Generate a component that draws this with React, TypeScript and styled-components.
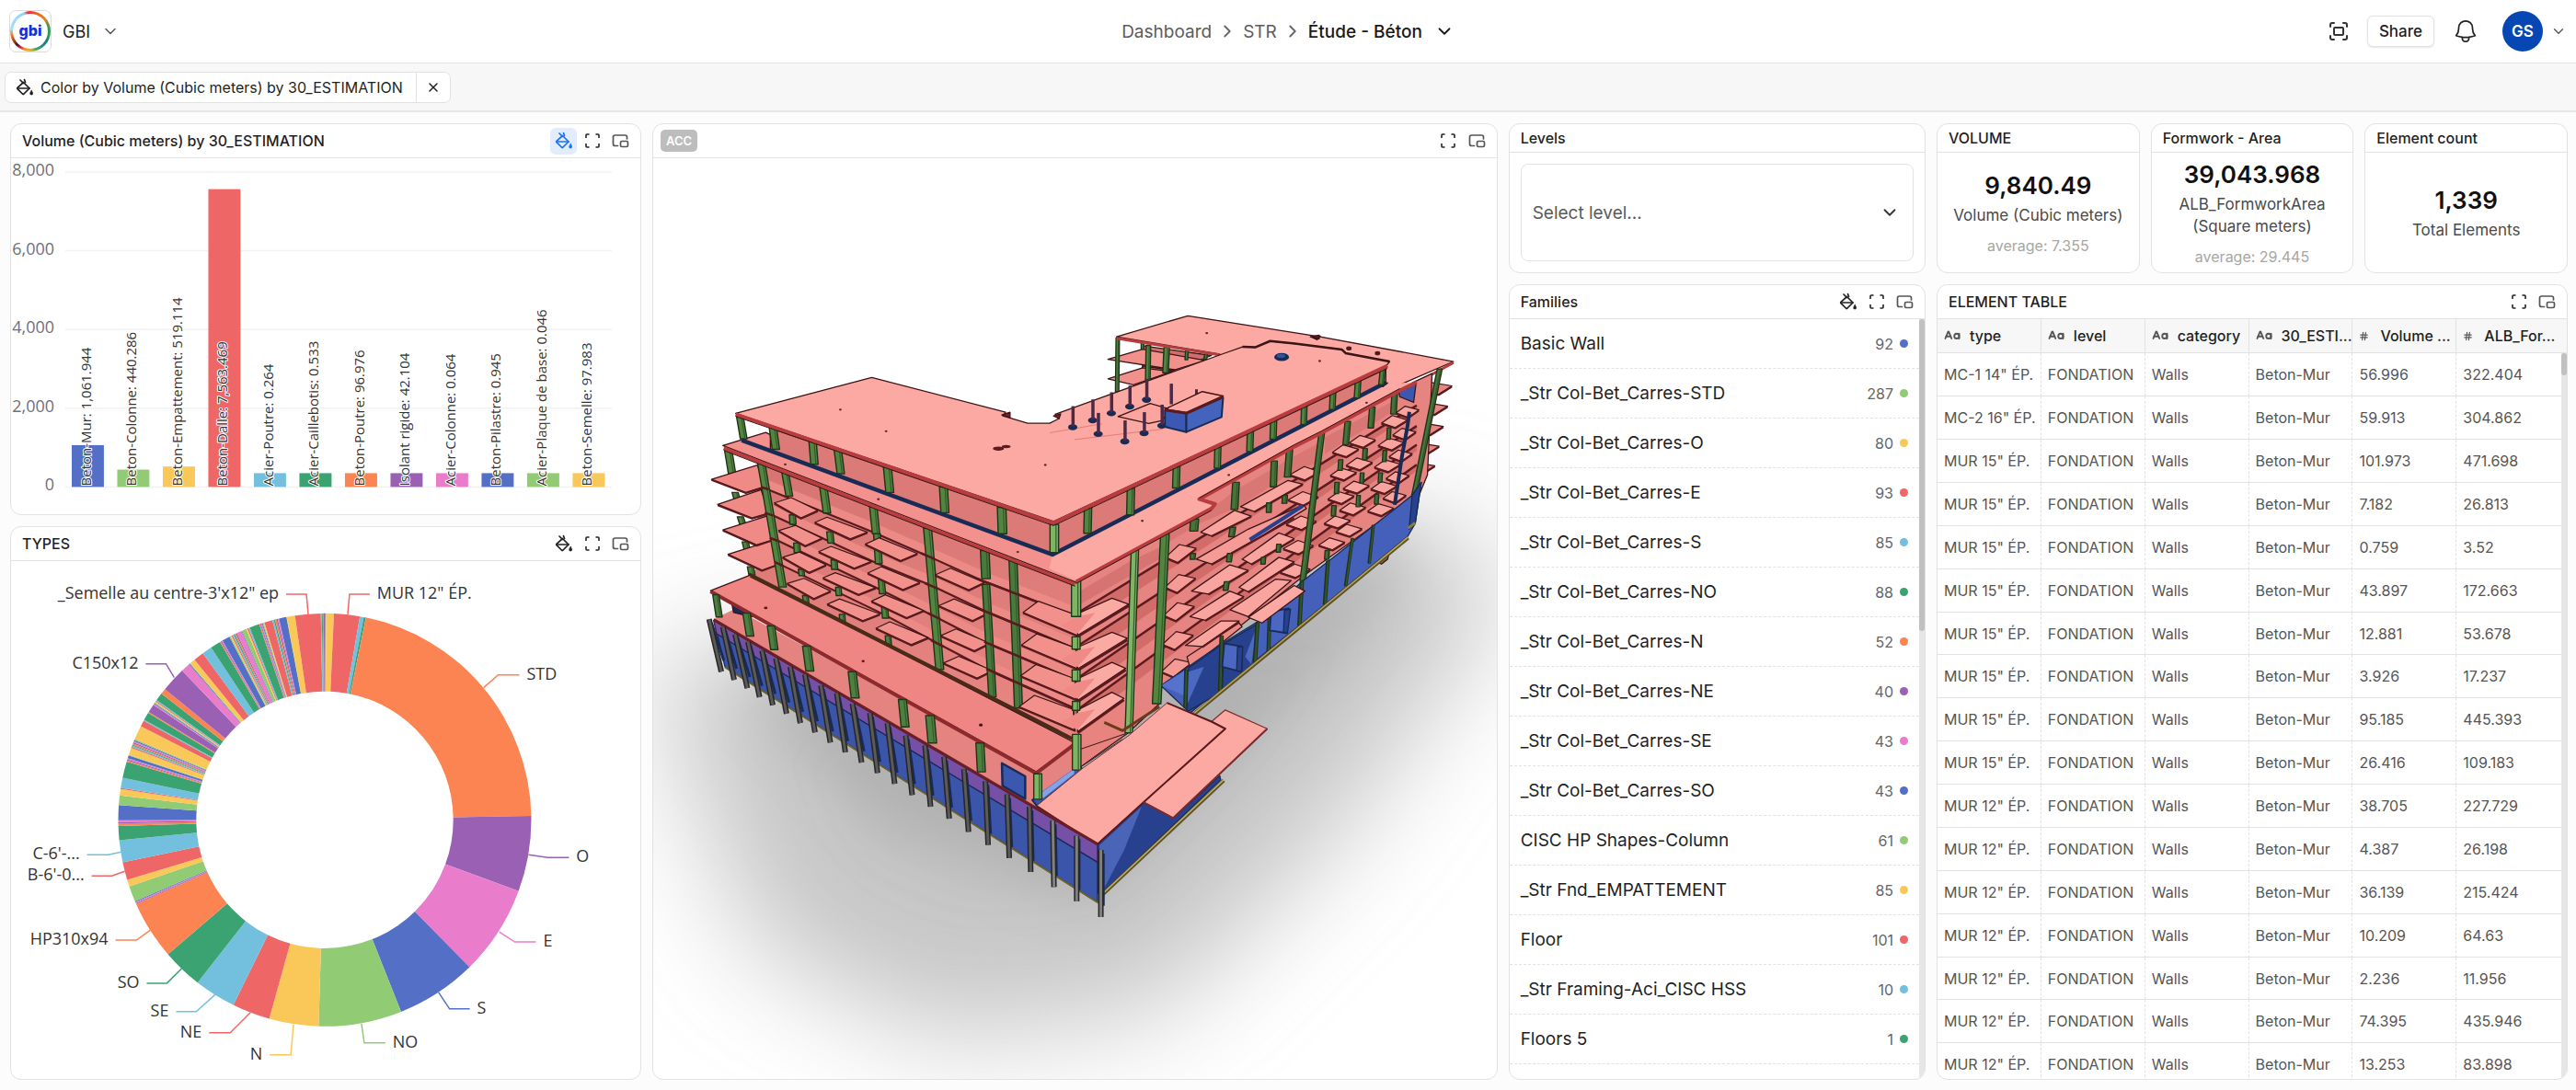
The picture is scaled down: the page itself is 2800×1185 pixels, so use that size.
import React from "react";
import styled, { createGlobalStyle, css } from "styled-components";
import { CaseSensitive, ChevronDown, ChevronRight, Fullscreen, Hash, X } from "lucide-react";

/* ---------- theme ---------- */

const line = "#e2e2e2";
const sans = `Inter, "Liberation Sans", sans-serif`;
const chartFont = `"Open Sans", "Noto Sans", sans-serif`;
const palette = ["#5470c6", "#91cc75", "#fac858", "#ee6666", "#73c0de", "#3ba272", "#fc8452", "#9a60b4", "#ea7ccc"];

const GlobalStyle = createGlobalStyle`
  *, *::before, *::after { box-sizing: border-box; }
  body { margin: 0; background: #fcfcfc; color: #1f1f1f; font-family: ${sans}; }
  button, select { font: inherit; color: inherit; }
`;

/* ---------- shell ---------- */

const Page = styled.div`
  display: flex;
  flex-direction: column;
  height: 100vh;
  min-height: 900px;
`;

const TopBar = styled.header`
  display: grid;
  grid-template-columns: 1fr auto 1fr;
  align-items: center;
  height: 69px;
  padding: 0 10px;
  background: #fff;
  border-bottom: 1px solid ${line};
`;

const PlainButton = styled.button`
  display: inline-flex;
  align-items: center;
  padding: 0;
  border: 0;
  background: none;
  cursor: pointer;
`;

const Workspace = styled(PlainButton)`
  justify-self: start;
  gap: 12px;
  font-size: 18px;
`;

const LogoTile = styled.span`
  display: grid;
  place-items: center;
  width: 46px;
  height: 46px;
  border: 1px solid #dcdcdc;
  border-radius: 7px;
  background: #fff;
`;

const LogoRing = styled.span`
  display: grid;
  width: 44px;
  height: 44px;
  padding: 3px;
  border-radius: 50%;
  background: conic-gradient(#e8343c 0deg, #f0641e 20deg, #ee7d1c 50deg, #3c9a52 75deg, #2f9a5a 105deg, #127c8a 125deg, #2b8f86 145deg, #5aa83c 165deg, #f2b01e 180deg, #f08c1c 200deg, #d81e5a 212deg, #3a1a1a 225deg, #b3441c 240deg, #f08a3c 262deg, #a8dcf8 275deg, #8fd4f8 340deg, #e8343c 352deg);
`;

const LogoText = styled.span`
  display: grid;
  place-items: center;
  border-radius: 50%;
  background: #fff;
  color: #1c2be6;
  font-size: 16px;
  font-weight: 800;
  line-height: 16px;
  padding-bottom: 3px;
`;

const Crumbs = styled.nav`
  display: flex;
  align-items: center;
  gap: 6px;
  font-size: 19px;
  color: #666;
`;

const Crumb = styled.a`
  color: #5c5c5c;
  text-decoration: none;
`;

const CurrentCrumb = styled(PlainButton)`
  gap: 13px;
  font-size: 19px;
  font-weight: 500;
  color: #1a1a1a;
`;

const Tools = styled.div`
  display: flex;
  align-items: center;
  justify-self: end;
  gap: 19px;
`;

const ShareButton = styled.button`
  height: 34px;
  padding: 0 12px;
  border: 1px solid ${line};
  border-radius: 6px;
  background: #fff;
  box-shadow: 0 1px 2px rgba(0, 0, 0, 0.1);
  font-size: 17px;
  font-weight: 500;
  cursor: pointer;
`;

const Account = styled(PlainButton)`
  gap: 8px;
  margin-left: 6px;
`;

const Avatar = styled.span`
  display: grid;
  place-items: center;
  width: 44px;
  height: 44px;
  border-radius: 50%;
  background: #0747b4;
  color: #fff;
  font-size: 17px;
  font-weight: 600;
`;

const FilterBar = styled.div`
  display: flex;
  align-items: center;
  height: 53px;
  padding: 0 5px;
  background: #f7f7f7;
  border-bottom: 2px solid #e6e6e6;
`;

const Chip = styled.div`
  display: flex;
  height: 34px;
  overflow: hidden;
  border: 1px solid ${line};
  border-radius: 7px;
  background: #fff;
  font-size: 16px;
`;

const ChipLabel = styled.span`
  display: flex;
  align-items: center;
  gap: 7px;
  padding: 0 14px 0 11px;
`;

const ChipClose = styled(PlainButton)`
  justify-content: center;
  width: 37px;
  border-left: 1px solid ${line};
`;

/* ---------- dashboard cards ---------- */

const Board = styled.main`
  flex: 1;
  min-height: 0;
  display: grid;
  grid-template-columns: repeat(12, minmax(0, 1fr));
  grid-template-rows: repeat(12, minmax(0, 1fr));
  gap: 12px;
  padding: 12px 9px 11px 11px;
`;

const Card = styled.section<{ $cols: string; $rows: string }>`
  position: relative;
  grid-column: ${(p) => p.$cols};
  grid-row: ${(p) => p.$rows};
  display: flex;
  flex-direction: column;
  min-width: 0;
  min-height: 0;
  overflow: hidden;
  border: 1px solid ${line};
  border-radius: 12px;
  background: #fff;
`;

const KpiRow = styled.div`
  grid-column: span 3;
  grid-row: span 2;
  display: grid;
  grid-template-columns: repeat(3, minmax(0, 1fr));
  gap: 12px;
`;

const CardHeader = styled.div<{ $compact?: boolean }>`
  flex: none;
  display: flex;
  align-items: center;
  justify-content: space-between;
  height: ${(p) => (p.$compact ? 31 : 37)}px;
  padding: 0 7px 0 12px;
  border-bottom: 1px solid ${line};
`;

const CardTitle = styled.h2`
  margin: 0;
  font-size: 16px;
  font-weight: 500;
  line-height: 20px;
`;

const Actions = styled.div`
  display: flex;
  gap: 2px;
`;

const IconButton = styled.button<{ $active?: boolean }>`
  display: grid;
  place-items: center;
  width: 29px;
  height: 29px;
  padding: 0;
  border: 0;
  border-radius: 6px;
  background: ${(p) => (p.$active ? "#e3ecfc" : "transparent")};
  color: ${(p) => (p.$active ? "#1a73f0" : "#222")};
  cursor: pointer;
`;

const CardBody = styled.div`
  flex: 1;
  display: flex;
  min-height: 0;
`;

const Drawing = styled.svg`
  display: block;
  width: 100%;
  height: 100%;
`;

const SourceBadge = styled.span`
  margin-left: -4px;
  padding: 0 6px;
  border-radius: 5px;
  background: #bdbdbd;
  color: #fff;
  font-size: 13px;
  font-weight: 600;
  line-height: 24px;
`;

/* ---------- level select ---------- */

const SelectWrap = styled.label`
  flex: 1;
  display: grid;
  align-items: center;
  margin: 12px;
  border: 1px solid ${line};
  border-radius: 8px;
  > * { grid-area: 1 / 1; }
  > svg { justify-self: end; margin-right: 14px; pointer-events: none; }
`;

const LevelSelect = styled.select`
  appearance: none;
  width: 100%;
  height: 100%;
  padding: 0 12px;
  border: 0;
  border-radius: 8px;
  background: none;
  color: #5a5a5a;
  font-size: 19px;
`;

/* ---------- kpi ---------- */

const KpiBody = styled.div`
  flex: 1;
  display: flex;
  flex-direction: column;
  align-items: center;
  justify-content: center;
  padding: 2px 12px 0;
  text-align: center;
`;

const KpiValue = styled.strong`
  font-size: 26px;
  font-weight: 600;
  line-height: 32px;
  color: #111;
`;

const KpiLabel = styled.span`
  margin-top: 4px;
  font-size: 17px;
  line-height: 24px;
  color: #4a4a4a;
`;

const KpiNote = styled.span`
  margin-top: 10px;
  font-size: 16px;
  line-height: 22px;
  color: #a6a6a6;
`;

/* ---------- families ---------- */

const FamilyList = styled.ul`
  flex: 1;
  margin: 0;
  padding: 0;
  overflow: hidden;
  list-style: none;
`;

const FamilyRow = styled.li`
  display: flex;
  align-items: center;
  gap: 7px;
  height: 54px;
  padding: 0 12px;
  border-bottom: 1px dashed ${line};
`;

const FamilyName = styled.span`
  flex: 1;
  font-size: 19px;
`;

const FamilyCount = styled.span`
  font-size: 16px;
  color: #666;
`;

const Dot = styled.span<{ $color: string }>`
  width: 9px;
  height: 9px;
  border-radius: 50%;
  background: ${(p) => p.$color};
`;

const Track = styled.div`
  flex: none;
  width: 6px;
  background: #e6e6e6;
`;

const Thumb = styled.div<{ $size: string }>`
  height: ${(p) => p.$size};
  border-radius: 3px;
  background: #c0c0c0;
`;

/* ---------- element table ---------- */

const TableArea = styled(CardBody)`
  position: relative;
  overflow: hidden;
`;

const Table = styled.table`
  align-self: flex-start;
  width: 100%;
  table-layout: fixed;
  border-collapse: separate;
  border-spacing: 0;
  font-size: 16px;
`;

const TableTrack = styled(Track)`
  position: absolute;
  top: 37px;
  right: 0;
  bottom: 0;
`;

const cell = css`
  padding: 0 0 0 7px;
  border-bottom: 1px solid ${line};
  text-align: left;
  white-space: nowrap;
`;

const Th = styled.th`
  ${cell}
  width: 16.5%;
  height: 37px;
  background: #f7f7f7;
  border-right: 1px solid ${line};
  font-weight: 500;
  &:last-child { width: auto; border-right: 0; }
`;

const ThInner = styled.span<{ $wide?: boolean }>`
  display: flex;
  align-items: center;
  gap: ${(p) => (p.$wide ? 12 : 10)}px;
  > svg { flex: none; color: #555; }
`;

/* rows share the window so that seventeen of them are always in view */
const Td = styled.td`
  ${cell}
  height: calc((100vh - 388px) / 17);
  border-right: 1px dashed ${line};
  color: #555;
  &:last-child { border-right: 0; }
`;

/* ---------- icons ---------- */

const BucketIcon = () => (
  <svg width="20" height="20" viewBox="0 0 20 20" fill="none" stroke="currentColor" strokeWidth="1.7" strokeLinecap="round" strokeLinejoin="round" aria-hidden="true">
    <path d="M8.5 4.5 15 11l-6 6q-.8.7-1.6 0L2 11.600q-.6-.7 0-1.300Z" />
    <path d="M2 11h13M5 2l3.500 3.500M9.500 1.500l1 3" />
    <path d="M17.200 13.500q1.800 2.500 1.300 3.700a1.500 1.500 0 0 1-2.700 0q-.4-1.200 1.400-3.700Z" fill="currentColor" strokeWidth=".8" />
  </svg>
);

const ExpandIcon = () => (
  <svg width="16" height="16" viewBox="0 0 16 16" fill="none" stroke="currentColor" strokeWidth="1.6" aria-hidden="true">
    <path d="M1 5V2q0-1 1-1h2.500M11.500 1H14q1 0 1 1v3M15 11v3q0 1-1 1h-2.500M4.500 15H2q-1 0-1-1v-3" />
  </svg>
);

const PipIcon = () => (
  <svg width="19" height="17" viewBox="0 0 19 17" fill="none" stroke="#555" strokeWidth="1.700" strokeLinecap="round" aria-hidden="true">
    <path d="M6.500 13.500H3.500q-2 0-2-2V4q0-2 2-2h11q2 0 2 2v2" />
    <rect x="9.500" y="8.500" width="8" height="6" rx="1.500" />
  </svg>
);

const BellIcon = () => (
  <svg width="30" height="30" viewBox="0 0 24 24" fill="none" stroke="#222" strokeWidth="1.400" strokeLinecap="round" strokeLinejoin="round" aria-hidden="true">
    <path d="M14.857 17.082a23.848 23.848 0 0 0 5.454-1.310A8.967 8.967 0 0 1 18 9.750V9A6 6 0 0 0 6 9v.750a8.967 8.967 0 0 1-2.312 6.022c1.733.640 3.560 1.085 5.455 1.310m5.714 0a24.255 24.255 0 0 1-5.714 0m5.714 0a3 3 0 1 1-5.714 0" />
  </svg>
);

const CardActions = ({ color, active }: { color?: boolean; active?: boolean }) => (
  <Actions>
    {color && <IconButton $active={active} aria-label="Color by"><BucketIcon /></IconButton>}
    <IconButton aria-label="Expand"><ExpandIcon /></IconButton>
    <IconButton aria-label="Pop out"><PipIcon /></IconButton>
  </Actions>
);

/* ---------- bar chart ---------- */

const volumes: [string, number, string][] = [
  ["Beton-Mur", 1061.944, "1,061.944"],
  ["Beton-Colonne", 440.286, "440.286"],
  ["Beton-Empattement", 519.114, "519.114"],
  ["Beton-Dalle", 7563.469, "7,563.469"],
  ["Acier-Poutre", 0.264, "0.264"],
  ["Acier-Caillebotis", 0.533, "0.533"],
  ["Beton-Poutre", 96.976, "96.976"],
  ["Isolant rigide", 42.104, "42.104"],
  ["Acier-Colonne", 0.064, "0.064"],
  ["Beton-Pilastre", 0.945, "0.945"],
  ["Acier-Plaque de base", 0.046, "0.046"],
  ["Beton-Semelle", 97.983, "97.983"],
];

const AxisText = styled.text`
  font: 18px ${chartFont};
  fill: #6e7079;
  text-anchor: end;
`;

const BarText = styled.text`
  font: 15px ${chartFont};
  fill: #333;
  stroke: #fff;
  stroke-width: 2px;
  stroke-linejoin: round;
  paint-order: stroke;
`;

const VolumeChart = () => {
  const left = 58, right = 653, base = 358, height = 343, band = (right - left) / volumes.length;
  return (
    <Drawing viewBox="0 0 683 388" role="img" aria-label="Volume by estimation">
      {[0, 2000, 4000, 6000, 8000].map((v) => {
        const y = base - (v / 8000) * height;
        return (
          <g key={v}>
            <line x1={left} x2={right} y1={y} y2={y} stroke="#f2f2f4" strokeWidth="1.5" />
            <AxisText x={46} y={y + 4}>{v.toLocaleString("en-US")}</AxisText>
          </g>
        );
      })}
      {volumes.map(([name, v], i) => {
        const h = Math.max(15, (v / 8000) * height);
        return <rect key={name} x={left + band * i + 7} y={base - h} width={35} height={h} fill={palette[i % 9]} />;
      })}
      {volumes.map(([name, , label], i) => (
        <BarText key={name} transform={`translate(${left + band * i + 28} ${base - 1}) rotate(-90)`}>{name}: {label}</BarText>
      ))}
    </Drawing>
  );
};

/* ---------- donut ---------- */

/* each entry: end angle in degrees, and how many equal slices run up to it */
const spans: [number, number][] = [
  [0.4, 2], [2.55, 1], [9.8, 1], [10.9, 1], [11.5, 1], [88.9, 1], [110.2, 1], [135.5, 1], [158.3, 1], [181.7, 1],
  [195.6, 1], [206.3, 1], [218, 1], [229.4, 1], [246, 1], [246.8, 3], [251.2, 1], [253.1, 1], [258.1, 1], [264.3, 1],
  [268.3, 1], [269, 1], [269.9, 2], [274.1, 1], [276.8, 1], [278.6, 1], [278.9, 1], [281.8, 1], [286.4, 1], [287.4, 3],
  [288.2, 1], [288.4, 1], [290.4, 1], [293.1, 8], [297, 1], [298.7, 1], [299, 1], [301.2, 1], [301.5, 1], [303.9, 1],
  [305.5, 6], [307.7, 1], [309.3, 1], [316.3, 1], [318.9, 1], [319.4, 2], [320.9, 1], [323.8, 1], [326.6, 1],
  [329.5, 1], [330.3, 3], [332.5, 1], [334.8, 7], [336.2, 1], [336.4, 1], [337.6, 1], [338.7, 3], [341.5, 1],
  [343, 6], [345.3, 1], [347.2, 5], [349.3, 1], [349.4, 1], [351.7, 1], [358.9, 1], [360, 4],
];

const callouts: [string, number, string, boolean][] = [
  [`_Semelle au centre-3'x12" ep`, 3, "323,58 321,36 299,36", true],
  [`MUR 12" ÉP.`, 3, "366,58 368,36 390,36", false],
  ["STD", 6, "514,138 530,124 553,124", false],
  ["O", 7, "563,320 584,323 607,323", false],
  ["E", 8, "531,404 548,415 571,415", false],
  ["S", 0, "465,470 477,488 499,488", false],
  ["NO", 1, "381,504 384,525 407,525", false],
  ["N", 2, "307,505 304,538 281,538", true],
  ["NE", 3, "260,492 238,514 215,514", true],
  ["SE", 4, "222,472 201,491 179,491", true],
  ["SO", 5, "185,444 169,460 147,460", true],
  ["HP310x94", 6, "151,402 136,413 113,413", true],
  ["B-6'-0...", 3, "123,338 109,343 87,343", true],
  ["C-6'-...", 4, "119,317 105,320 82,320", true],
  ["C150x12", 7, "177,127 168,112 146,112", true],
];

const CalloutText = styled.text`
  font: 18px ${chartFont};
  fill: #333;
`;

const ring = (a0: number, a1: number) => {
  const cx = 341, cy = 282, R = 225, r = 140;
  const p = (a: number, q: number) => {
    const t = (a * Math.PI) / 180;
    return `${(cx + q * Math.sin(t)).toFixed(2)} ${(cy - q * Math.cos(t)).toFixed(2)}`;
  };
  return `M${p(a0, R)}A${R} ${R} 0 0 1 ${p(a1, R)}L${p(a1, r)}A${r} ${r} 0 0 0 ${p(a0, r)}Z`;
};

const TypesChart = () => {
  const slices: [number, number][] = [];
  let from = 0;
  spans.forEach(([end, n]) => {
    const step = (end - from) / n;
    for (let i = 0; i < n; i++) slices.push([from + step * i, from + step * (i + 1)]);
    from = end;
  });
  return (
    <Drawing viewBox="0 0 684 564" role="img" aria-label="Types">
      {slices.map(([a, b], i) => <path key={i} d={ring(a, b)} fill={palette[i % 9]} />)}
      {callouts.map(([label, c, points, toLeft]) => {
        const [x, y] = points.split(" ")[2].split(",").map(Number);
        return (
          <g key={label}>
            <polyline points={points} fill="none" stroke={palette[c]} strokeWidth="1.5" />
            <CalloutText x={toLeft ? x - 8 : x + 8} y={y + 5} textAnchor={toLeft ? "end" : "start"}>{label}</CalloutText>
          </g>
        );
      })}
    </Drawing>
  );
};

/* ---------- building model ---------- */

const Facet = styled.g`
  stroke-linejoin: round;
  * { vector-effect: non-scaling-stroke; }
`;

const overall = "translate(700 130) scale(.5995 .574)";
const westView = "translate(760 400) scale(.3333 .4082)";
const eastView = "translate(1160 340) scale(.3333 .4082)";

const tone = { roof: "#fba9a2", west: "#f08c88", slab: "#f2918c", wall: "#dc7a77", edge: "#b93c3e", ink: "#3b1416", green: "#52853f", leaf: "#7db565", pine: "#35592c", blue: "#3c57ae", deep: "#27418f", navy: "#182b56", purple: "#7650a6", pile: "#555" };

type Pt = [number, number];
const Poly = ({ p, f, s = tone.ink, w = 1.3 }: { p: string; f: string; s?: string; w?: number }) => <polygon points={p} fill={f} stroke={s} strokeWidth={w} />;
const Edge = ({ p, s = tone.ink, w = 2 }: { p: string; s?: string; w?: number }) => <polyline points={p} fill="none" stroke={s} strokeWidth={w} />;

/* column: top x, top y, bottom x, bottom y, width */
type Col = [number, number, number, number, number];
const Columns = ({ list, fill = tone.green }: { list: Col[]; fill?: string }) => (
  <>
    {list.map(([x1, y1, x2, y2, w], i) => (
      <g key={i}>
        <Poly p={`${x1 - w / 2},${y1} ${x1 + w / 2},${y1} ${x2 + w / 2},${y2} ${x2 - w / 2},${y2}`} f={fill} s="#1f3319" w={1.4} />
        <Edge p={`${x1 + w / 5},${y1} ${x2 + w / 5},${y2}`} s={tone.pine} w={1.2} />
      </g>
    ))}
  </>
);

/* the same slab outline stamped at several places */
const Slabs = ({ at, shape, fill = tone.slab }: { at: Pt[]; shape: Pt[]; fill?: string }) => (
  <>
    {at.map(([x, y], i) => (
      <g key={i}>
        <Poly p={shape.map(([a, b]) => `${x + a},${y + b}`).join(" ")} f={fill} w={1.2} />
        <Edge p={[shape[0], shape[3], shape[2]].map(([a, b]) => `${x + a},${y + b + 2}`).join(" ")} s="#5c1a1e" w={2} />
      </g>
    ))}
  </>
);

const westFloors = [
  "215,320 565,436 745,500 930,568 1025,597 1228,662",
  "230,388 580,520 755,578 940,650 1030,680 1228,748",
  "245,455 590,590 765,660 940,733 1035,765 1228,832",
  "262,522 600,655 775,732 945,805 1035,838 1228,908",
];

const piles: [number, number, number, number][] = [
  [30, 668, 70, 808], [75, 688, 112, 830], [115, 708, 155, 852], [157, 728, 195, 876], [203, 752, 238, 897],
  [248, 772, 283, 920], [295, 795, 328, 945], [343, 815, 376, 970], [395, 845, 426, 997], [447, 865, 475, 1023],
  [498, 893, 528, 1050], [555, 918, 580, 1078], [612, 945, 636, 1107], [672, 978, 693, 1137], [735, 1005, 753, 1168],
  [797, 1035, 814, 1200], [862, 1068, 877, 1235], [932, 1100, 941, 1270], [1003, 1135, 1010, 1305],
  [1076, 1168, 1080, 1342], [1152, 1205, 1156, 1382], [1230, 1245, 1230, 1420], [1309, 1283, 1309, 1462],
];

const BuildingModel = () => (
  <Drawing viewBox="710 171 916 1002" role="img" aria-label="Building model colored by volume">
    <defs>
      <filter id="soft" x="-50%" y="-50%" width="200%" height="200%"><feGaussianBlur stdDeviation="62" /></filter>
      <filter id="near" x="-50%" y="-50%" width="200%" height="200%"><feGaussianBlur stdDeviation="30" /></filter>
      <linearGradient id="westWall" x1="0" y1="0" x2="0" y2="1">
        <stop offset="0" stopColor="#d67472" />
        <stop offset="1" stopColor="#e88783" />
      </linearGradient>
    </defs>
    <polygon points="700,720 1180,640 1560,560 1640,640 1460,900 1260,1100 1020,1130 820,1030" fill="#a0a0a0" opacity=".6" filter="url(#soft)" />
    <polygon points="800,740 1180,700 1520,570 1530,620 1340,830 1190,980 960,900" fill="#8f8f8f" opacity=".36" filter="url(#near)" />

    {/* back wing */}
    <Facet transform={eastView}>
      <Poly p="245,86 470,112 345,152 245,140" f="#cf6f6d" />
      <Poly p="132,122 245,95 450,125 350,150" f={tone.slab} />
      <Poly p="245,140 345,152 250,180 235,178" f="#cf6f6d" />
      <Poly p="132,174 245,145 340,155 215,190" f={tone.slab} />
      <Columns list={[[164, 65, 162, 208, 11], [245, 78, 245, 95, 9], [264, 85, 262, 180, 15], [324, 90, 320, 158, 18], [390, 98, 388, 123, 9], [452, 108, 450, 122, 9]]} />
      <Poly p="160,62 393,6 825,62 1260,128 1085,190 900,300 495,108" f={tone.roof} />
      <Edge p="160,66 495,110" s={tone.edge} w={3} />
      <Edge p="1260,131 1150,180" s={tone.edge} w={3} />
      <Poly p="795,62 825,60 815,70" f="#6b1f22" />
    </Facet>

    {/* east end and facade */}
    <Facet transform={eastView}>
      <Slabs at={[[1150, 203], [1136, 257], [1122, 311], [1108, 364], [1094, 416]]} shape={[[-25, 10], [15, -22], [105, -10], [62, 12]]} fill="#e98682" />
      <Poly p="28,715 220,628 470,525 425,490 740,352 830,315 1085,200 1190,160 1175,430 1150,480 1060,530 770,700 305,1000 300,1040 195,1120 30,1215" f="#e58481" />
      <Poly p="30,745 205,660 310,620 310,650 30,780" f="#d67471" s="none" />
      {[[800, 245], [888, 300], [974, 350], [1058, 403]].map(([a, b]) => (
        <g key={a}>
          <Poly p={`30,${a} 1140,${b} 1140,${b + 16} 30,${a + 42}`} f="#d26c69" s="none" />
          <Edge p={`30,${a} 1140,${b}`} s="#5c1a1e" w={2.5} />
        </g>
      ))}
      <Poly p="300,560 470,520 550,470 720,390 820,345 820,395 720,430 560,515 430,560 330,610" f="#d97774" s="none" />
      <Poly p="840,330 1060,235 1060,262 840,375" f="#d97774" s="none" />

      <Slabs at={[[320, 650], [318, 730], [314, 805], [310, 882], [306, 955]]} shape={[[0, 0], [45, -34], [100, -24], [40, 14]]} fill="#f69a95" />
      <Poly p="420,655 590,575 770,510 780,520 640,590 470,668" f="#f69a95" />
      <Poly p="565,515 720,445 768,455 610,528" f="#f9a49e" />
      <Poly p="435,583 545,525 600,540 470,593" f="#f9a49e" />
      <Poly p="570,655 690,585 740,600 600,668" f="#f9a49e" />
      <Poly p="405,740 530,670 590,685 460,748" f="#f9a49e" />
      <Poly p="560,730 690,650 740,662 590,742" f="#f9a49e" />
      <Poly p="400,808 530,740 575,755 450,818" f="#f9a49e" />
      <Poly p="530,790 680,708 730,712 590,808" f="#f9a49e" />
      <Poly p="385,885 500,820 560,820 440,888" f="#f9a49e" />
      <Poly p="390,915 560,825 570,835 400,945" f="#ee8a86" />
      <Edge p="470,595 600,542" s="#5c1a1e" />
      <Edge p="610,530 768,457" s="#5c1a1e" />
      <Edge p="470,670 640,592 740,545" s="#5c1a1e" />
      <Edge p="600,670 740,602" s="#5c1a1e" />
      <Edge p="460,750 590,687" s="#5c1a1e" />
      <Edge p="590,744 740,664" s="#5c1a1e" />
      <Edge p="450,820 575,757" s="#5c1a1e" />
      <Edge p="440,890 560,822" s="#5c1a1e" />
      <Slabs at={[[725, 430], [720, 497], [714, 562], [704, 627], [694, 690]]} shape={[[0, 0], [48, -22], [98, -8], [50, 14]]} fill="#f9a49e" />
      <Slabs at={[[865, 370], [858, 432], [850, 495], [838, 560], [820, 618]]} shape={[[0, 0], [35, -20], [85, -8], [45, 12]]} fill="#f9a49e" />
      <Slabs at={[[920, 345], [910, 405], [900, 467], [888, 525], [876, 582]]} shape={[[0, 0], [35, -20], [85, -8], [45, 12]]} fill="#f9a49e" />
      <Slabs at={[[1025, 292], [1014, 352], [1002, 410], [990, 468], [980, 527]]} shape={[[0, 0], [35, -20], [85, -8], [45, 12]]} fill="#f9a49e" />
      <Slabs at={[[1072, 265], [1062, 324], [1050, 382], [1040, 440], [1030, 493]]} shape={[[0, 0], [30, -18], [75, -8], [40, 12]]} fill="#f9a49e" />
      <Edge p="595,603 768,513" s={tone.deep} w={4} />
      <Columns fill="#48743a" list={[[550, 450, 545, 522, 22], [540, 570, 535, 595, 18], [530, 640, 527, 662, 16], [520, 715, 516, 738, 16], [675, 393, 672, 462, 20], [658, 505, 657, 530, 16], [710, 485, 708, 506, 16], [690, 615, 688, 636, 14], [640, 650, 638, 668, 14], [725, 362, 718, 436, 20], [415, 548, 412, 580, 26], [410, 640, 408, 655, 16], [915, 288, 908, 350, 18], [892, 390, 890, 418, 14], [880, 450, 878, 480, 14], [870, 512, 868, 540, 14], [848, 632, 846, 655, 14], [995, 250, 990, 305, 18], [972, 360, 970, 390, 14], [962, 425, 960, 452, 12], [950, 485, 948, 515, 12], [1068, 213, 1064, 268, 18], [1050, 305, 1048, 335, 12], [1036, 365, 1034, 395, 12], [1022, 425, 1020, 450, 12], [1010, 482, 1008, 508, 12]]} />
      <Edge p="1116,262 1110,300 1092,380 1068,510" s={tone.navy} w={4} />
      <Poly p="1080,205 1138,185 1130,237 1085,222" f={tone.blue} />
      <Columns fill="#48743a" list={[[1215, 148, 1128, 500, 16], [830, 318, 768, 712, 18]]} />
    </Facet>

    {/* east base */}
    <Facet transform={eastView}>
      <Poly p="305,992 500,882 620,822 765,715 860,655 1125,485 1155,450 1135,560 1110,595 760,830 400,1065" f="#4460ba" s={tone.navy} />
      <Poly p="395,945 500,885 500,1010 390,1062" f={tone.deep} s={tone.navy} />
      <Poly p="512,880 625,825 610,935 505,1003" f={tone.deep} s={tone.navy} />
      <Poly p="305,992 388,950 385,1020" f="#5573cc" s="none" />
      <Poly p="395,955 445,942 392,1040" f="#4c69c0" s="none" />
      <Poly p="580,915 620,830 600,935" f="#4c69c0" s="none" />
      <Poly p="1125,485 1155,450 1135,560 1115,575" f={tone.deep} s={tone.navy} />
      <Columns fill="#2c4a3c" list={[[387, 950, 384, 1050, 8], [503, 860, 498, 1005, 10], [620, 825, 612, 930, 10], [660, 800, 656, 900, 9], [765, 715, 757, 832, 10], [850, 660, 840, 775, 9], [930, 600, 908, 725, 7], [998, 565, 985, 665, 7]]} />
      <Poly p="512,880 570,888 568,955 505,942" f="#4a68c2" s={tone.navy} w={1.8} />
      <Poly p="555,890 572,888 568,955 552,952" f={tone.deep} s={tone.navy} />
      <Poly p="665,795 722,786 715,852 660,845" f="#4a68c2" s={tone.navy} w={1.8} />
      <Poly p="708,792 728,788 718,852 705,850" f={tone.deep} s={tone.navy} />
      <Poly p="590,810 740,725 775,740 635,825" f={tone.roof} />
      <Poly p="1015,665 1050,640 1045,655 1025,668" f="#7d6c34" />
      <Edge p="410,1070 760,835 1112,598" s="#5d5128" w={4} />
      <Edge p="410,1068 760,833 1112,596" s="#b8a65c" w={1.5} />
      <Edge p="1112,572 1135,558" s="#8c7c40" w={3} />
    </Facet>

    {/* west facade */}
    <Facet transform={westView}>
      <Poly p="188,250 1225,575 1225,990 165,548 188,530" f="url(#westWall)" s="none" />
      <Columns list={[[92, 215, 105, 280, 24], [115, 330, 122, 350, 20], [132, 395, 140, 415, 20], [148, 462, 155, 485, 20], [165, 528, 170, 550, 20]]} />
      <Poly p="38,295 188,257 210,315 150,330" f="#ef8a86" />
      <Poly p="58,362 200,323 225,385 170,398" f="#ef8a86" />
      <Poly p="75,430 218,393 245,455 185,470" f="#ef8a86" />
      <Poly p="92,495 235,458 262,520 203,537" f="#ef8a86" />
      <Edge p="38,297 150,332 205,318" s="#5c1a1e" />
      <Edge p="58,364 170,400 220,388" s="#5c1a1e" />
      <Edge p="75,432 185,472 240,457" s="#5c1a1e" />
      <Edge p="92,497 203,539 258,522" s="#5c1a1e" />
      {westFloors.map((p) => (
        <g key={p}>
          <g transform="translate(0 -14)"><Edge p={p} s="#ec8a86" w={9} /></g>
          <Edge p={p} s="#5c1a1e" w={2.2} />
        </g>
      ))}
      <Columns list={[[302, 390, 304, 415, 20], [316, 465, 318, 490, 20], [330, 535, 333, 552, 18], [344, 605, 347, 625, 18], [424, 435, 428, 465, 20], [438, 510, 440, 535, 20], [452, 583, 454, 605, 18], [464, 655, 466, 678, 18], [578, 440, 584, 520, 22], [592, 560, 596, 600, 20], [603, 635, 606, 665, 20], [614, 712, 617, 742, 18]]} />
      <Slabs at={[[243, 358], [257, 432], [270, 503], [285, 573]]} shape={[[0, 0], [55, -14], [142, 20], [87, 40]]} />
      <Slabs at={[[375, 410], [388, 488], [402, 558], [416, 628]]} shape={[[0, 0], [40, -14], [172, 26], [116, 44]]} />
      <Slabs at={[[540, 468], [548, 545], [560, 620], [575, 692]]} shape={[[0, 0], [45, -17], [170, 25], [115, 44]]} />
      <Columns list={[[200, 250, 270, 582, 24], [278, 275, 292, 340, 22], [403, 315, 415, 385, 24], [565, 360, 575, 440, 24], [743, 425, 783, 802, 26]]} />
      <Slabs at={[[768, 550], [780, 632], [786, 712], [795, 785]]} shape={[[0, 0], [50, -18], [160, 20], [110, 40]]} />
      <Columns fill="#487a3b" list={[[930, 485, 934, 560, 28], [934, 575, 955, 875, 24], [1022, 505, 1040, 905, 26]]} />
      {[["200,316 225,322", "722,492 765,507", "905,560 1228,662"], ["212,384 240,392", "735,572 775,586", "920,643 1228,748"], ["228,451 255,459", "745,652 785,668", "928,728 1228,832"], ["245,516 272,526", "755,724 795,741", "935,800 1228,908"]].flat().map((p) => <Edge key={p} p={p} s="#5c1a1e" w={2.6} />)}
      <Edge p="160,548 1228,992" s="#4a2a18" w={4} />
    </Facet>

    {/* corner balconies */}
    <Facet transform={eastView}>
      <Poly p="-130,1040 -20,1080 35,1110 180,1030 195,1115 30,1215 30,1150" f="#e88480" s="none" />
      <Slabs at={[[-145, 797], [-150, 884], [-153, 966], [-158, 1048]]} shape={[[0, 0], [50, -30], [178, 8], [182, 63]]} fill={tone.slab} />
      {[[200, 775, 858], [195, 866, 948], [190, 946, 1032], [184, 1026, 1115]].map(([x, y, tip]) => (
        <g key={y}>
          <Poly p={`33,${tip} 33,${tip - 58} 145,${y - 16} ${x},${y}`} f="#fbaaa3" />
          <Poly p={`33,${tip - 5} -20,${tip - 26} 33,${tip - 50} 90,${tip - 60}`} f="#f08a86" s="none" />
          <Edge p={`33,${tip + 3} ${x},${y + 4}`} s="#5c1a1e" w={3} />
        </g>
      ))}
      <Columns fill={tone.leaf} list={[[28, 712, 28, 808, 30], [28, 862, 28, 895, 26], [28, 950, 28, 980, 26], [28, 1034, 28, 1058, 24], [220, 628, 200, 1118, 24]]} />
      <Columns list={[[318, 588, 291, 1040, 28]]} />
      <Edge p="120,1090 180,1112 300,1048" s="#6b3a1c" w={3} />
      <Edge p="30,1165 190,1120" s={tone.ink} w={1} />
      <Edge p="-5,1235 180,1135" s={tone.ink} w={1} />
    </Facet>

    {/* upper terrace */}
    <Facet transform={westView}>
      <Poly p="75,205 215,170 290,200 1155,495 1290,440 1290,545 1228,570" f="#f2918d" />
      <Edge p="78,212 1225,575" s={tone.edge} w={4} />
      <Edge p="78,218 1225,580" w={1} />
    </Facet>
    <Facet transform={eastView}>
      <Poly p="-49,643 1045,187 1140,183 1085,205 830,315 740,352 725,358 430,495 480,505 475,515 220,628 28,712 -60,680" f={tone.roof} s="none" />
      <Edge p="1140,183 1085,205 830,318 740,355 430,495 482,508 470,520 220,630 28,715" s={tone.edge} w={4} />
      <Edge p="1085,200 830,313 740,350 430,492" w={1} />
      <Edge p="470,525 220,635 28,720" w={1} />
      <Poly p="955,172 1045,185 1030,195 960,182" f={tone.navy} />
    </Facet>

    {/* recess below the main roof */}
    <Facet transform={overall}>
      <Poly p="228,583 742,765 742,823 228,627" f={tone.wall} />
      <Poly p="742,765 1345,470 1345,497 742,823" f={tone.wall} />
      <Edge p="176,606 740,823 1345,497" s={tone.navy} w={4.500} />
    </Facet>
    <Facet transform={westView}>
      <Columns list={[[130, 125, 143, 187, 22], [238, 155, 248, 215, 24], [368, 195, 374, 255, 24], [450, 215, 460, 280, 24], [612, 262, 620, 330, 26], [795, 315, 800, 384, 26], [985, 370, 988, 440, 28]]} />
      <Columns fill={tone.leaf} list={[[1157, 415, 1157, 490, 28]]} />
    </Facet>
    <Facet transform={eastView}>
      <Columns list={[[67, 518, 65, 586, 24], [207, 465, 205, 537, 24], [356, 408, 354, 465, 22], [491, 355, 489, 412, 20], [597, 313, 595, 368, 20], [673, 283, 671, 335, 20], [773, 243, 771, 296, 18], [867, 208, 864, 256, 18], [949, 175, 945, 225, 18], [1030, 140, 1024, 190, 16]]} />
    </Facet>

    {/* main roof */}
    <Facet transform={overall}>
      <Poly p="165,555 412,487 655,553 650,560 695,574 735,574 752,565 745,557 1050,442 1085,429 1108,430 1135,418 1180,423 1265,434 1272,441 1352,457 1345,466 742,760" f={tone.roof} />
      <Edge p="165,557 742,763 1348,465" s={tone.edge} w={4} />
      <Edge p="165,561 742,768 1348,470" w={1} />
      <Edge p="1085,429 1108,430 1135,418 1180,423 1265,434 1272,441 1352,457" w={2.5} />
      <Poly p="648,558 663,553 663,563" f="#7c2226" />
      <Poly p="742,560 755,556 752,565" f="#7c2226" />
      <ellipse cx="642" cy="622" rx="10" ry="4" fill="#5c1a1e" />
      <ellipse cx="656" cy="618" rx="8" ry="3" fill="#5c1a1e" />
      {[[355, 548], [438, 589], [727, 653], [1020, 403], [1225, 456], [903, 759], [677, 818], [424, 718], [255, 652], [1060, 672], [1310, 535]].map(([x, y]) => <ellipse key={x} cx={x} cy={y} rx="2.500" ry="2" fill="#5c2a2c" />)}
      {[[1278, 432], [1330, 441]].map(([x, y]) => <ellipse key={x} cx={x} cy={y} rx="5" ry="4" fill="#4a1c20" />)}
      <Poly p="1208,410 1224,407 1224,414" f="#5c1a1e" />
      <Edge p="735,592 830,575" s="#e87a78" w={1} />
      <Edge p="780,605 940,585" s="#e87a78" w={1} />
    </Facet>

    {/* rooftop plant */}
    <Facet transform={eastView}>
      <Poly p="165,275 270,240 335,255 310,285 265,293" f="#fba59e" />
      {[[17, 303], [82, 285], [100, 321], [143, 266], [203, 248], [187, 341], [250, 319], [258, 230], [308, 299]].map(([x, y]) => (
        <g key={x}>
          <ellipse cx={x} cy={y} rx="15" ry="8" fill={tone.navy} />
          <Edge p={`${x + 1},${y - 56} ${x + 1},${y - 2}`} s="#4b2a48" w={3.500} />
        </g>
      ))}
      <Edge p="339,187 339,242" s="#4b2a48" w={3.500} />
      <Edge p="421,202 421,222" s="#4b2a48" w={3} />
      <Poly p="318,258 388,266 388,316 318,302" f="#3a58b4" s={tone.navy} w={2} />
      <Poly p="388,266 508,224 503,276 388,316" f="#4463bd" s={tone.navy} w={2} />
      <Poly p="318,255 440,208 508,220 388,264" f={tone.roof} w={1.500} />
      <Edge p="318,257 388,266 508,222" s="#5c1a1e" w={3} />
      <ellipse cx="699" cy="116" rx="24" ry="11" fill={tone.navy} />
      <ellipse cx="697" cy="113" rx="14" ry="5" fill="#3450a0" />
    </Facet>

    {/* podium */}
    <Facet transform={westView}>
      <Poly p="45,668 115,640 1095,1075 1225,1000 1225,1080 1100,1170 1298,1262" f="#e58380" s="none" />
      <Poly p="105,630 170,655 170,662 110,650" f={tone.navy} />
      <Poly p="35,592 165,550 1225,998 1098,1075" f="#f08683" />
      <Edge p="35,594 1098,1079 1225,1000" s="#8c2a2d" w={4} />
      <Edge p="165,552 1225,990" s="#4a2a18" w={3.500} />
      <Columns fill="#4d8040" list={[[52, 603, 63, 662, 20], [152, 652, 164, 713, 24], [232, 686, 243, 749, 24], [348, 740, 359, 806, 26], [497, 808, 507, 878, 26], [661, 882, 670, 955, 26], [751, 925, 759, 998, 28], [914, 998, 919, 1075, 26]]} />
      <ellipse cx="215" cy="638" rx="6" ry="3.500" fill="#5c1a1e" />
      <ellipse cx="533" cy="780" rx="5" ry="3.500" fill="#5c1a1e" />
      <ellipse cx="917" cy="950" rx="6" ry="4" fill={tone.ink} />
      <Poly p="986,1052 1062,1087 1062,1147 988,1112" f={tone.blue} s={tone.navy} w={2.500} />
      <Poly p="1085,1150 1240,1058 1250,1070 1100,1166" f="#3557b0" s={tone.navy} w={2} />
      <Poly p="1115,1130 1222,1066 1222,1080 1120,1146" f="#86a2e6" s="none" />
      <Columns fill={tone.leaf} list={[[1103, 1080, 1103, 1148, 26], [1230, 975, 1230, 1070, 28]]} />
    </Facet>

    {/* canopy */}
    <Facet transform={eastView}>
      <Poly p="98,1415 250,1303 345,1345 497,1232 500,1243 112,1548 98,1545" f={tone.deep} s={tone.navy} />
      <Poly p="104,1418 242,1314 185,1430 118,1535" f="#4a64b8" s="none" />
      <Edge p="104,1557 510,1245" s="#5d5128" w={4} />
      <Edge p="104,1555 510,1243" s="#c6b468" w={1.500} />
      <Poly p="470,1088 515,1057 652,1107 345,1345 248,1303 515,1107" f={tone.roof} s="#7c3030" />
      <Poly p="-100,1312 50,1212 200,1125 325,1038 470,1088 515,1107 248,1303 95,1415" f={tone.roof} s="#7c3030" w={1} />
      <Edge p="325,1038 470,1088 515,1107 248,1303 95,1417 -100,1314" s="#5c1a1e" w={2} />
      <Edge p="248,1303 345,1345 652,1107" s="#7c2a2d" w={2} />
    </Facet>

    {/* retaining wall and piles */}
    <Facet transform={westView}>
      <Poly p="45,672 1298,1270 1298,1316 55,708" f={tone.purple} s="#3a1f52" />
      <Poly p="57,708 1298,1316 1298,1422 82,795" f="#3a55a9" s={tone.navy} />
      <Edge p="45,669 1298,1267" s="#6b1f22" w={3} />
      <Edge p="82,796 1300,1424" s="#6d6130" w={2} />
      {piles.map(([x1, y1, x2, y2]) => (
        <g key={x1}>
          <Edge p={`${x1 + 8},${y1 + 10} ${x2 + 8},${y2 - 30}`} s={tone.navy} w={3} />
          <Edge p={`${x1},${y1} ${x2},${y2}`} s="#262626" w={6} />
          <Edge p={`${x1},${y1} ${x2},${y2}`} s={x1 > 1100 ? "#808080" : "#5a5a5a"} w={3} />
        </g>
      ))}
    </Facet>
  </Drawing>
);

/* ---------- data ---------- */

const families: [string, number][] = [
  ["Basic Wall", 92], ["_Str Col-Bet_Carres-STD", 287], ["_Str Col-Bet_Carres-O", 80], ["_Str Col-Bet_Carres-E", 93],
  ["_Str Col-Bet_Carres-S", 85], ["_Str Col-Bet_Carres-NO", 88], ["_Str Col-Bet_Carres-N", 52], ["_Str Col-Bet_Carres-NE", 40],
  ["_Str Col-Bet_Carres-SE", 43], ["_Str Col-Bet_Carres-SO", 43], ["CISC HP Shapes-Column", 61], ["_Str Fnd_EMPATTEMENT", 85],
  ["Floor", 101], ["_Str Framing-Aci_CISC HSS", 10], ["Floors 5", 1],
];

const columns: [string, boolean][] = [
  ["type", false], ["level", false], ["category", false], ["30_ESTI...", false], ["Volume ...", true], ["ALB_For...", true],
];

const elements: [string, string, string][] = [
  [`MC-1 14" ÉP.`, "56.996", "322.404"], [`MC-2 16" ÉP.`, "59.913", "304.862"], [`MUR 15" ÉP.`, "101.973", "471.698"],
  [`MUR 15" ÉP.`, "7.182", "26.813"], [`MUR 15" ÉP.`, "0.759", "3.52"], [`MUR 15" ÉP.`, "43.897", "172.663"],
  [`MUR 15" ÉP.`, "12.881", "53.678"], [`MUR 15" ÉP.`, "3.926", "17.237"], [`MUR 15" ÉP.`, "95.185", "445.393"],
  [`MUR 15" ÉP.`, "26.416", "109.183"], [`MUR 12" ÉP.`, "38.705", "227.729"], [`MUR 12" ÉP.`, "4.387", "26.198"],
  [`MUR 12" ÉP.`, "36.139", "215.424"], [`MUR 12" ÉP.`, "10.209", "64.63"], [`MUR 12" ÉP.`, "2.236", "11.956"],
  [`MUR 12" ÉP.`, "74.395", "435.946"], [`MUR 12" ÉP.`, "13.253", "83.898"],
];

const kpis: [string, string, string, string?][] = [
  ["VOLUME", "9,840.49", "Volume (Cubic meters)", "average: 7.355"],
  ["Formwork - Area", "39,043.968", "ALB_FormworkArea (Square meters)", "average: 29.445"],
  ["Element count", "1,339", "Total Elements"],
];

/* ---------- page ---------- */

export default function App() {
  return (
    <Page>
      <GlobalStyle />
      <TopBar>
        <Workspace>
          <LogoTile><LogoRing><LogoText>gbi</LogoText></LogoRing></LogoTile>
          GBI
          <ChevronDown size={20} strokeWidth={1.8} color="#555" />
        </Workspace>
        <Crumbs aria-label="Breadcrumb">
          <Crumb href="#dashboard">Dashboard</Crumb>
          <ChevronRight size={22} />
          <Crumb href="#str">STR</Crumb>
          <ChevronRight size={22} />
          <CurrentCrumb>Étude - Béton <ChevronDown size={22} /></CurrentCrumb>
        </Crumbs>
        <Tools>
          <PlainButton aria-label="Fit to screen"><Fullscreen size={24} color="#333" /></PlainButton>
          <ShareButton>Share</ShareButton>
          <PlainButton aria-label="Notifications"><BellIcon /></PlainButton>
          <Account aria-label="Account"><Avatar>GS</Avatar><ChevronDown size={18} color="#555" strokeWidth={1.8} /></Account>
        </Tools>
      </TopBar>

      <FilterBar>
        <Chip>
          <ChipLabel><BucketIcon />Color by Volume (Cubic meters) by 30_ESTIMATION</ChipLabel>
          <ChipClose aria-label="Remove color"><X size={16} strokeWidth={2.2} /></ChipClose>
        </Chip>
      </FilterBar>

      <Board>
        <Card $cols="1 / span 3" $rows="1 / span 5">
          <CardHeader><CardTitle>Volume (Cubic meters) by 30_ESTIMATION</CardTitle><CardActions color active /></CardHeader>
          <CardBody><VolumeChart /></CardBody>
        </Card>

        <Card $cols="1 / span 3" $rows="6 / span 7">
          <CardHeader><CardTitle>TYPES</CardTitle><CardActions color /></CardHeader>
          <CardBody><TypesChart /></CardBody>
        </Card>

        <Card $cols="4 / span 4" $rows="1 / span 12">
          <CardHeader><SourceBadge>ACC</SourceBadge><CardActions /></CardHeader>
          <CardBody><BuildingModel /></CardBody>
        </Card>

        <Card $cols="8 / span 2" $rows="1 / span 2">
          <CardHeader $compact><CardTitle>Levels</CardTitle></CardHeader>
          <CardBody>
            <SelectWrap>
              <LevelSelect aria-label="Levels" defaultValue=""><option value="">Select level...</option></LevelSelect>
              <ChevronDown size={22} color="#333" />
            </SelectWrap>
          </CardBody>
        </Card>

        <Card $cols="8 / span 2" $rows="3 / span 10">
          <CardHeader><CardTitle>Families</CardTitle><CardActions color /></CardHeader>
          <CardBody>
            <FamilyList>
              {families.map(([name, count], i) => (
                <FamilyRow key={name}>
                  <FamilyName>{name}</FamilyName>
                  <FamilyCount>{count}</FamilyCount>
                  <Dot $color={palette[i % 9]} />
                </FamilyRow>
              ))}
            </FamilyList>
            <Track><Thumb $size="41%" /></Track>
          </CardBody>
        </Card>

        <KpiRow>
          {kpis.map(([title, value, label, note]) => (
            <Card key={title} $cols="auto" $rows="auto">
              <CardHeader $compact><CardTitle>{title}</CardTitle></CardHeader>
              <KpiBody>
                <KpiValue>{value}</KpiValue>
                <KpiLabel>{label}</KpiLabel>
                {note && <KpiNote>{note}</KpiNote>}
              </KpiBody>
            </Card>
          ))}
        </KpiRow>

        <Card $cols="10 / span 3" $rows="3 / span 10">
          <CardHeader><CardTitle>ELEMENT TABLE</CardTitle><CardActions /></CardHeader>
          <TableArea>
            <Table>
              <thead>
                <tr>
                  {columns.map(([name, numeric]) => (
                    <Th key={name} scope="col">
                      <ThInner $wide={numeric}>{numeric ? <Hash size={11} strokeWidth={2.5} /> : <CaseSensitive size={18} strokeWidth={2.5} />}<span>{name}</span></ThInner>
                    </Th>
                  ))}
                </tr>
              </thead>
              <tbody>
                {elements.map(([type, volume, area], i) => (
                  <tr key={i}><Td>{type}</Td><Td>FONDATION</Td><Td>Walls</Td><Td>Beton-Mur</Td><Td>{volume}</Td><Td>{area}</Td></tr>
                ))}
              </tbody>
            </Table>
            <TableTrack><Thumb $size="24px" /></TableTrack>
          </TableArea>
        </Card>
      </Board>
    </Page>
  );
}
